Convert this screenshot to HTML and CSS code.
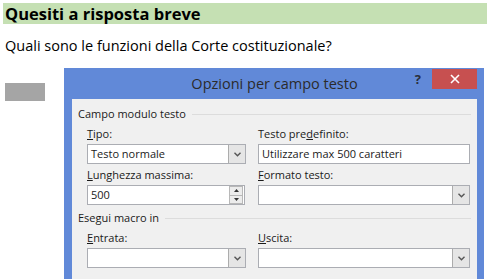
FILE: index.html
```html
<!DOCTYPE html>
<html lang="it">
<head>
  <meta charset="UTF-8">
  <meta name="viewport" content="width=device-width, initial-scale=1.0">
  <link rel="stylesheet" href="styles.css">
  <title>Quesiti a risposta breve</title>
</head>
<body>

  <div class="heading">Quesiti a risposta breve</div>
  <p class="question">Quali sono le funzioni della Corte costituzionale?</p>

  <div class="row">
    <div class="answerBox"></div>

    <div class="dialog">
      <div class="titlebar">
        <span></span>
        <span class="title">Opzioni per campo testo</span>
        <div class="winButtons">
          <span class="help">?</span>
          <span class="close">
            <svg width="10" height="10" viewBox="0 0 10 10"><path d="M1 1 L9 9 M9 1 L1 9" stroke="#fff" stroke-width="1.6"/></svg>
          </span>
        </div>
      </div>

      <div class="dialogBody">
        <div class="group"><span>Campo modulo testo</span><i></i></div>
        <div class="fields">
          <div class="field">
            <label><u>T</u>ipo:</label>
            <div class="select">
              <span class="value">Testo normale</span>
              <span class="drop"><svg width="7" height="5" viewBox="0 0 7 5"><path d="M0.5 0.8 L3.5 3.8 L6.5 0.8" fill="none" stroke="#555" stroke-width="1.4"/></svg></span>
            </div>
          </div>
          <div class="field">
            <label>Testo pre<u>d</u>efinito:</label>
            <div class="textbox"><span class="value">Utilizzare max 500 caratteri</span></div>
          </div>
          <div class="field">
            <label><u>L</u>unghezza massima:</label>
            <div class="textbox spin">
              <span class="value">500</span>
              <span class="spinner">
                <span><svg width="5" height="3" viewBox="0 0 5 3"><path d="M0 3 L2.5 0 L5 3 Z" fill="#333"/></svg></span>
                <span><svg width="5" height="3" viewBox="0 0 5 3"><path d="M0 0 L2.5 3 L5 0 Z" fill="#333"/></svg></span>
              </span>
            </div>
          </div>
          <div class="field">
            <label><u>F</u>ormato testo:</label>
            <div class="select">
              <span class="value"></span>
              <span class="drop"><svg width="7" height="5" viewBox="0 0 7 5"><path d="M0.5 0.8 L3.5 3.8 L6.5 0.8" fill="none" stroke="#555" stroke-width="1.4"/></svg></span>
            </div>
          </div>
        </div>

        <div class="group second"><span>Esegui macro in</span><i></i></div>
        <div class="fields">
          <div class="field">
            <label><u>E</u>ntrata:</label>
            <div class="select">
              <span class="value"></span>
              <span class="drop"><svg width="7" height="5" viewBox="0 0 7 5"><path d="M0.5 0.8 L3.5 3.8 L6.5 0.8" fill="none" stroke="#555" stroke-width="1.4"/></svg></span>
            </div>
          </div>
          <div class="field">
            <label><u>U</u>scita:</label>
            <div class="select">
              <span class="value"></span>
              <span class="drop"><svg width="7" height="5" viewBox="0 0 7 5"><path d="M0.5 0.8 L3.5 3.8 L6.5 0.8" fill="none" stroke="#555" stroke-width="1.4"/></svg></span>
            </div>
          </div>
        </div>
      </div>
    </div>
  </div>

</body>
</html>
```

FILE: styles.css
```css
html, body {
  margin: 0;
  height: 100%;
  overflow: hidden;
}

body {
  background: #fff;
  padding: 3px 0 0 3px;
  font-family: "Open Sans", "Noto Sans", sans-serif;
  color: #000;
}

.heading {
  background-color: #c5e0b3;
  height: 21px;
  line-height: 21px;
  padding-left: 2px;
  font-size: 16.5px;
  font-weight: bold;
}

.question {
  margin: 12px 0 0 2px;
  font-size: 14.5px;
  line-height: 20px;
}

.row {
  display: flex;
  align-items: flex-start;
  margin-top: 12px;
}

.answerBox {
  width: 40px;
  height: 18px;
  margin: 15px 0 0 2px;
  background-color: #a5a5a5;
}

/* dialog window */
.dialog {
  margin-left: 19px;
  width: 420px;
  background-color: #6189d8;
  padding: 0 7px 0 8px;
  box-sizing: border-box;
}

.titlebar {
  height: 31px;
  display: grid;
  grid-template-columns: 1fr auto 1fr;
  align-items: start;
}

.title {
  font-size: 14.5px;
  line-height: 32px;
  color: #2b2b2b;
}

.winButtons {
  justify-self: end;
  display: flex;
  align-items: flex-start;
  padding-top: 1px;
}

.help {
  font-size: 13px;
  font-weight: bold;
  color: #2a2f3a;
  line-height: 20px;
  margin-right: 11px;
}

.close {
  width: 45px;
  height: 20px;
  background-color: #c75050;
  display: flex;
  align-items: center;
  justify-content: center;
}

.dialogBody {
  background-color: #f0f0f0;
  padding: 7px 6px 40px 6px;
  font-size: 11px;
  color: #1a1a1a;
}

.group {
  display: flex;
  align-items: center;
  line-height: 15px;
}

.group i {
  flex: 1;
  border-top: 1px solid #dcdcdc;
  margin-left: 6px;
  margin-top: 1px;
}

.group.second {
  margin-top: 5px;
}

.fields {
  display: grid;
  grid-template-columns: 159px 212px;
  column-gap: 12px;
  row-gap: 3px;
  margin-top: 5px;
  padding-left: 9px;
}

.field label {
  display: block;
  line-height: 15px;
  margin-bottom: 3px;
}

.select, .textbox {
  height: 20px;
  box-sizing: border-box;
  background-color: #fff;
  border: 1px solid #abadb3;
  display: flex;
  align-items: center;
}

.value {
  flex: 1;
  padding-left: 3px;
  line-height: 18px;
  white-space: nowrap;
}

.drop {
  width: 16px;
  height: 18px;
  background-color: #e5e5e5;
  border-left: 1px solid #acacac;
  display: flex;
  align-items: center;
  justify-content: center;
}

.spin {
  width: 158px;
}

.spinner {
  width: 12px;
  height: 16px;
  margin-right: 1px;
  border: 1px solid #b8b8b8;
  background-color: #ececec;
  display: flex;
  flex-direction: column;
}

.spinner span {
  flex: 1;
  display: flex;
  align-items: center;
  justify-content: center;
}

.spinner span + span {
  border-top: 1px solid #b8b8b8;
}
```
